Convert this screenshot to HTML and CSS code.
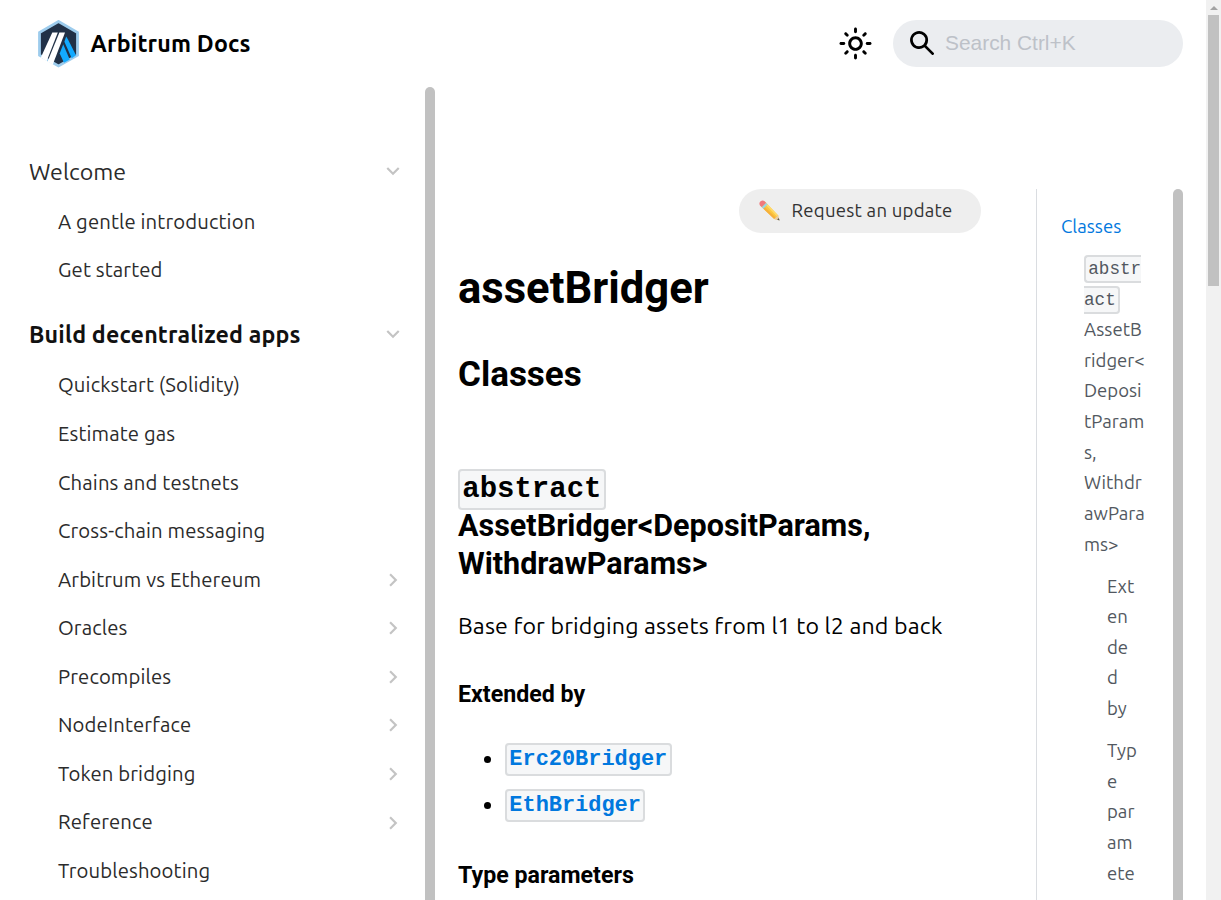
FILE: index.html
```html
<!DOCTYPE html>
<html lang="en">
<head>
<meta charset="utf-8">
<title>assetBridger | Arbitrum Docs</title>
<link rel="stylesheet" href="styles.css">
</head>
<body>
<div class="viewport">
  <div class="page">
    <header class="navbar">
      <a class="brand">
        <svg class="logo" width="43" height="48" viewBox="0 0 43 48">
          <path d="M21.5 1.5 40.5 12.5v22.6L21.5 46 2.5 35.100V12.5z" fill="#213147" stroke="#9dcced" stroke-width="2.800"/>
          <path d="M29.200 16.500 31 19.500 39 35.200 34.700 38.200 27.400 21.800z" fill="#12aaff"/>
          <path d="M26.200 24.200 32.700 39.500 27 42.800 22.700 33.500z" fill="#12aaff"/>
          <path d="M15.300 12.600H20.800L9.600 41.300 3.800 37.500z" fill="#fff"/>
          <path d="M22.400 12.600H28L15.800 44.500 10.500 41.800z" fill="#fff"/>
        </svg>
        <span class="brand-name">Arbitrum Docs</span>
      </a>
      <div class="tools">
        <svg class="sun" width="35" height="35" viewBox="0 0 24 24"><path fill="#000" d="M12,9c1.65,0,3,1.35,3,3s-1.35,3-3,3s-3-1.35-3-3S10.35,9,12,9 M12,7c-2.76,0-5,2.24-5,5s2.24,5,5,5s5-2.24,5-5 S14.76,7,12,7L12,7z M2,13l2,0c0.55,0,1-0.45,1-1s-0.45-1-1-1l-2,0c-0.55,0-1,0.45-1,1S1.45,13,2,13z M20,13l2,0c0.55,0,1-0.45,1-1 s-0.45-1-1-1l-2,0c-0.55,0-1,0.45-1,1S19.45,13,20,13z M11,2v2c0,0.55,0.45,1,1,1s1-0.45,1-1V2c0-0.55-0.45-1-1-1S11,1.45,11,2z M11,20v2c0,0.55,0.45,1,1,1s1-0.45,1-1v-2c0-0.55-0.45-1-1-1C11.45,19,11,19.45,11,20z M5.99,4.58c-0.39-0.39-1.03-0.39-1.41,0 c-0.39,0.39-0.39,1.03,0,1.41l1.06,1.06c0.39,0.39,1.03,0.39,1.41,0s0.39-1.03,0-1.41L5.99,4.58z M18.36,16.95 c-0.39-0.39-1.03-0.39-1.41,0c-0.39,0.39-0.39,1.03,0,1.41l1.06,1.06c0.39,0.39,1.03,0.39,1.41,0c0.39-0.39,0.39-1.03,0-1.41 L18.36,16.95z M19.42,5.99c0.39-0.39,0.39-1.03,0-1.41c-0.39-0.39-1.03-0.39-1.41,0l-1.06,1.06c-0.39,0.39-0.39,1.03,0,1.41 s1.03,0.39,1.41,0L19.42,5.99z M7.05,18.36c0.39-0.39,0.39-1.03,0-1.41c-0.39-0.39-1.03-0.39-1.41,0l-1.06,1.06 c-0.39,0.39-0.39,1.03,0,1.41s1.03,0.39,1.41,0L7.05,18.36z"/></svg>
        <div class="search">
          <svg class="lens" width="24" height="24" viewBox="0 0 16 16"><path fill="#000" d="M6.02945,10.20327a4.17382,4.17382,0,1,1,4.17382-4.17382A4.15609,4.15609,0,0,1,6.02945,10.20327Zm9.69195,4.2199L10.8989,9.59979A5.88021,5.88021,0,0,0,12.058,6.02856,6.00467,6.00467,0,1,0,9.59979,10.8989l4.82338,4.82338a.89729.89729,0,0,0,1.29912,0,.89749.89749,0,0,0-.00087-1.29909Z"/></svg>
          <span>Search Ctrl+K</span>
        </div>
      </div>
    </header>
    <div class="main">
      <nav class="sidebar">
        <a class="top">Welcome<svg class="chev down" viewBox="0 0 24 24"><path d="M8.59 16.59 13.17 12 8.59 7.41 10 6l6 6-6 6z"/></svg></a>
        <a class="sub">A gentle introduction</a>
        <a class="sub">Get started</a>
        <a class="top active">Build decentralized apps<svg class="chev down" viewBox="0 0 24 24"><path d="M8.59 16.59 13.17 12 8.59 7.41 10 6l6 6-6 6z"/></svg></a>
        <a class="sub">Quickstart (Solidity)</a>
        <a class="sub">Estimate gas</a>
        <a class="sub">Chains and testnets</a>
        <a class="sub">Cross-chain messaging</a>
        <a class="sub">Arbitrum vs Ethereum<svg class="chev" viewBox="0 0 24 24"><path d="M8.59 16.59 13.17 12 8.59 7.41 10 6l6 6-6 6z"/></svg></a>
        <a class="sub">Oracles<svg class="chev" viewBox="0 0 24 24"><path d="M8.59 16.59 13.17 12 8.59 7.41 10 6l6 6-6 6z"/></svg></a>
        <a class="sub">Precompiles<svg class="chev" viewBox="0 0 24 24"><path d="M8.59 16.59 13.17 12 8.59 7.41 10 6l6 6-6 6z"/></svg></a>
        <a class="sub">NodeInterface<svg class="chev" viewBox="0 0 24 24"><path d="M8.59 16.59 13.17 12 8.59 7.41 10 6l6 6-6 6z"/></svg></a>
        <a class="sub">Token bridging<svg class="chev" viewBox="0 0 24 24"><path d="M8.59 16.59 13.17 12 8.59 7.41 10 6l6 6-6 6z"/></svg></a>
        <a class="sub">Reference<svg class="chev" viewBox="0 0 24 24"><path d="M8.59 16.59 13.17 12 8.59 7.41 10 6l6 6-6 6z"/></svg></a>
        <a class="sub">Troubleshooting</a>
      </nav>
      <div class="thumb side-thumb"></div>
      <article class="content">
        <a class="update">
          <svg class="pencil" width="21" height="21" viewBox="0 0 21 21">
            <path d="M1.2 5.6 5.6 1.2 19 15.2 20.3 20.2 15.2 19z" fill="#fbc83f"/>
            <path d="M2.7 7.1 4.2 5.6 17.2 18 15.2 19z" fill="#f6b03c"/>
            <path d="M5.9 3.9 7.2 2.7 19 15.2 17.8 16.3z" fill="#ffda6c"/>
            <path d="M15.2 19 19 15.2 20.3 20.2z" fill="#e8cda9"/>
            <path d="M18.2 19.8 19.8 18 20.6 20.6z" fill="#555"/>
            <path d="M2.7 7.1 7 2.8 8.6 4.5 4.3 8.8z" fill="#9bd4e2"/>
            <path d="M1 5.4C-.2 3.8.6 2.3 1.6 1.3 2.8.2 4.4.1 5.5 1.3L7 2.8 2.7 7.1z" fill="#f0787c"/>
          </svg>Request an update</a>
        <h1>assetBridger</h1>
        <h2>Classes</h2>
        <h3><code>abstract</code><br>AssetBridger&lt;DepositParams, WithdrawParams&gt;</h3>
        <p>Base for bridging assets from l1 to l2 and back</p>
        <h4>Extended by</h4>
        <ul>
          <li><a><code>Erc20Bridger</code></a></li>
          <li><a><code>EthBridger</code></a></li>
        </ul>
        <h4>Type parameters</h4>
      </article>
      <aside class="toc">
        <a class="toc-active">Classes</a>
        <a class="toc-2"><code>abstr<br>act</code><br>AssetB<br>ridger&lt;<br>Deposi<br>tParam<br>s,<br>Withdr<br>awPara<br>ms&gt;</a>
        <a class="toc-3">Ext<br>en<br>de<br>d<br>by</a>
        <a class="toc-3">Typ<br>e<br>par<br>am<br>ete</a>
      </aside>
      <div class="thumb toc-thumb"></div>
    </div>
  </div>
  <div class="scrollbar"><i class="arrow"></i><div class="scroll-thumb"></div></div>
</div>
</body>
</html>
```
FILE: styles.css
```css
* { box-sizing: border-box; }
body {
  margin: 0;
  overflow: hidden;
  background: #fff;
  color: #000;
  font: 23.2px/38.3px Ubuntu, "Noto Sans", sans-serif;
}
.viewport { display: flex; height: 900px; overflow: hidden; }
.page { flex: 1; min-width: 0; }

.navbar {
  display: flex;
  justify-content: space-between;
  align-items: center;
  height: 87px;
  padding: 0 23px 0 37px;
}
.brand { display: flex; align-items: center; gap: 10.6px; }
.brand-name { font-weight: 700; letter-spacing: .17px; }
.logo { display: block; }
.tools { display: flex; align-items: center; gap: 20px; }
.sun { display: block; margin-bottom: 1px; }
.search {
  display: flex;
  align-items: center;
  gap: 11.5px;
  width: 290px;
  height: 47px;
  padding: 0 0 2px 16.5px;
  border-radius: 24px;
  background: #ebedf0;
  color: #bdc1c8;
  font: 20.9px "Liberation Sans", sans-serif;
}

.main { display: flex; height: 813px; }
.sidebar { width: 425px; padding: 58.4px 19px 0 29px; }
.top, .sub {
  display: flex;
  align-items: center;
  justify-content: space-between;
}
.top { height: 51.4px; margin-bottom: .9px; color: #2b2b2b; }
.sub { height: 48.57px; padding-left: 29px; font-size: 20.3px; letter-spacing: .13px; color: #2b2b2b; }
.sub + .top { margin-top: 13.9px; margin-bottom: 1.2px; }
.active { font-weight: 700; letter-spacing: .18px; color: #111; }
.chev { width: 26px; height: 26px; fill: #c4c4c4; }
.down { transform: rotate(90deg); }

.thumb { width: 10px; background: #c1c1c1; border-radius: 5px 5px 0 0; }

.content {
  display: flex;
  flex-direction: column;
  width: 601px;
  padding: 102px 55px 0 23px;
}
.update {
  display: flex;
  align-self: flex-end;
  align-items: center;
  gap: 11.6px;
  width: 242px;
  height: 44px;
  padding: 0 0 0 20px;
  border-radius: 22px;
  background: #eee;
  color: #333;
  font-size: 18.56px;
  letter-spacing: .25px;
}
.pencil { margin-bottom: 1px; }
h1, h2, h3, h4 { margin: 0; font-family: Roboto, sans-serif; font-weight: 700; }
h1 { margin-top: 28px; font-size: 43.6px; line-height: 55px; }
h2 { margin-top: 37px; font-size: 35px; line-height: 44px; }
h3 { margin-top: 72px; font-size: 30.52px; line-height: 38px; }
p { margin: 23px 0 0; letter-spacing: .13px; }
h4 { margin-top: 35px; font-size: 23.2px; line-height: 30px; }
ul { margin: 29px 0 0; padding-left: 47px; }
li + li { margin-top: 7.7px; }
li code { color: #0178de; font-weight: 700; font-size: 21.95px; }
code {
  padding: 2px 2.3px;
  border: 2px solid #dadcde;
  border-radius: 4px;
  background: #f6f7f8;
  font-family: "Liberation Mono", monospace;
  font-size: 95%;
  line-height: 1;
  vertical-align: middle;
}
ul + h4 { margin-top: 37px; }

.toc {
  width: 137px;
  margin-top: 102px;
  padding: 23px 22px 0 24px;
  border-left: 1px solid #dadde1;
  overflow: hidden;
  color: #525860;
  font-size: 18.56px;
  line-height: 30.65px;
}
.toc a { display: block; }
.toc .toc-active { color: #0178de; }
.toc-2 { margin: 11px 0 0 23px; }
.toc-3 { margin: 11.3px 0 0 46px; }
.toc-thumb { margin-top: 102px; }

.scrollbar { width: 15px; background: #f1f1f1; }
.arrow {
  display: block;
  margin: 6px 0 5px 4px;
  width: 0;
  border: 4px solid transparent;
  border-top: 0;
  border-bottom-color: #a3a3a3;
}
.scroll-thumb { width: 11px; height: 271px; margin-left: 2px; background: #c1c1c1; }
```
